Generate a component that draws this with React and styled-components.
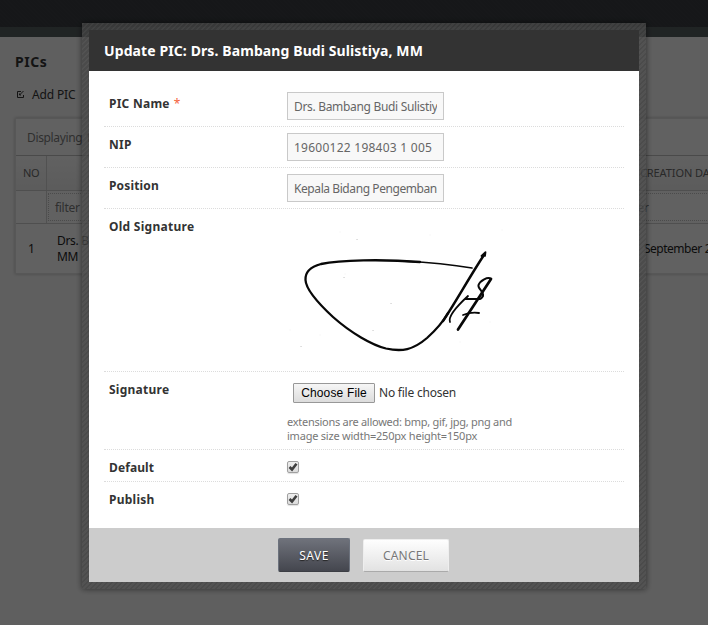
import React from "react";
import styled, { createGlobalStyle } from "styled-components";

const Global = createGlobalStyle`
  *, *::before, *::after { box-sizing: border-box; }
  html, body { margin: 0; width: 100%; height: 625px; overflow: hidden; background: #ededed; }
  body, input, button { font-family: "Noto Sans", Tahoma, sans-serif; font-size: 12px; }
`;

const T = styled.span`
  white-space: nowrap;
  letter-spacing: ${(p) => p.$ls || 0}px;
  word-spacing: ${(p) => p.$ws || 0}px;
`;

const Page = styled.div`
  height: 625px;
  overflow: hidden;
  color: #333;
`;
const TopBar = styled.div`
  height: 27px;
  background: repeating-linear-gradient(45deg, #3a3e42 0 1px, #373b3f 1px 3px);
`;
const SubBar = styled.div`
  height: 10px;
  background: #525a5b;
`;
const Content = styled.main`
  padding: 15px 0 0 15px;
`;
const PageTitle = styled.h1`
  margin: 0;
  height: 20px;
  font-size: 14px;
  line-height: 20px;
  font-weight: 700;
`;
const AddLink = styled.div`
  display: flex;
  align-items: center;
  gap: 7px;
  height: 20px;
  margin-top: 12px;
`;
const Grid = styled.section`
  width: 760px;
  margin-top: 14px;
  border: 1px solid #dadada;
  background: #f3f3f3;
  box-shadow: 0 0 3px rgba(0, 0, 0, 0.25);
`;
const Summary = styled.div`
  height: 37px;
  padding: 0 11px;
  line-height: 37px;
  color: #777;
  border-bottom: 1px solid #b8b8b8;
`;
const GridRow = styled.div`
  display: grid;
  grid-template-columns: 31px 561px 1fr;
  height: ${(p) => p.$h}px;
  border-bottom: ${(p) => (p.$last ? "0" : "1px solid #c6c6c6")};
  background: ${(p) => (p.$head ? "linear-gradient(#f3f3f3, #e5e5e5)" : "transparent")};
`;
const Cell = styled.div`
  display: flex;
  align-items: center;
  justify-content: ${(p) => (p.$center ? "center" : "flex-start")};
  padding-left: ${(p) => p.$pl || 0}px;
  line-height: 16px;
  border-right: ${(p) => (p.$rule ? "1px solid #cacaca" : "0")};
  font-size: ${(p) => p.$size || 12}px;
  color: ${(p) => p.$color || "#222"};
`;
const FilterBox = styled.div`
  flex: 1;
  height: 28px;
  margin-right: 1px;
  padding-left: ${(p) => p.$pl}px;
  border: 1px dotted #bbb;
  line-height: 28px;
`;

const Overlay = styled.div`
  position: fixed;
  inset: 0;
  background: rgba(0, 0, 0, 0.6);
`;
const Frame = styled.div`
  position: fixed;
  left: 82px;
  top: 23px;
  width: 564px;
  height: 566px;
  padding: 7px;
  background: repeating-linear-gradient(135deg, rgba(78, 78, 78, 0.75) 0 2px, rgba(68, 68, 68, 0.75) 2px 3.54px);
  box-shadow: 0 0 6px rgba(0, 0, 0, 0.55);
`;
const Dialog = styled.form`
  display: flex;
  flex-direction: column;
  height: 552px;
  background: #fff;
  color: #333;
`;
const Header = styled.header`
  height: 41px;
  padding-left: 15px;
  background: #333;
  color: #fff;
  font-size: 14px;
  font-weight: 700;
  line-height: 41px;
`;
const Body = styled.div`
  flex: 1;
  padding: 15px 15px 0;
`;
const Field = styled.div`
  display: flex;
  height: ${(p) => p.$h}px;
  padding: 6px 0 0 5px;
  border-bottom: ${(p) => (p.$last ? "0" : "1px dotted #dcdcdc")};
`;
const Label = styled.label`
  width: 178px;
  padding-top: 3px;
  line-height: 18px;
  font-weight: 700;
`;
const Required = styled.span`
  margin-left: 4px;
  color: #f4623a;
  font-weight: 400;
`;
const TextInput = styled.input`
  width: 157px;
  height: 28px;
  padding: 0 6px;
  border: 1px solid #c9c9c9;
  border-radius: 0;
  background: #f8f8f8;
  color: #666;
  outline: 0;
  letter-spacing: ${(p) => p.$ls}px;
`;
const FileRow = styled.div`
  display: flex;
  align-items: center;
  gap: 4px;
  height: 25px;
  padding: 5px 0 0 6px;
  line-height: 16px;
`;
const FileText = styled.span`
  letter-spacing: -0.22px;
  white-space: nowrap;
`;
const FileButton = styled.button`
  width: 82px;
  height: 20px;
  padding: 0;
  border: 1px solid #989898;
  border-radius: 1px;
  background: linear-gradient(#f6f6f6, #dcdcdc);
  color: #000;
  font-family: "Liberation Sans", Arial, sans-serif;
  line-height: 18px;
`;
const Hint = styled.div`
  margin-top: 12px;
  font-size: 11px;
  line-height: 14px;
  color: #777;
`;
const Box = styled.span`
  display: block;
  width: 12px;
  height: 12px;
  margin-top: 5px;
  border: 1px solid #a0a0a0;
  border-radius: 2px;
  background: linear-gradient(#eee, #dcdcdc);
  box-shadow: 0 1px 1px rgba(0, 0, 0, 0.12);
  svg { display: block; }
`;
const Footer = styled.footer`
  display: flex;
  justify-content: center;
  align-items: center;
  gap: 13px;
  height: 54px;
  padding-right: 1px;
  background: #ccc;
`;
const Button = styled.button`
  width: ${(p) => (p.$primary ? 72 : 86)}px;
  height: ${(p) => (p.$primary ? 34 : 33)}px;
  padding: 0;
  border: 1px solid ${(p) => (p.$primary ? "#6c727d" : "#eee")};
  border-bottom-color: ${(p) => (p.$primary ? "#3c3e44" : "#aaa")};
  border-radius: 2px;
  background: ${(p) => (p.$primary ? "linear-gradient(#6f727b, #44464e)" : "linear-gradient(#fefefe, #e2e2e2)")};
  color: ${(p) => (p.$primary ? "#fff" : "#777")};
  text-shadow: ${(p) => (p.$primary ? "0 1px 1px #222" : "0 1px 0 #fff")};
`;

const EditIcon = () => (
  <svg width="10" height="10" viewBox="0 0 10 10" fill="none" stroke="#333">
    <path d="M6 2.500H2.500V8.500H8.500V6M4.500 6L8.500 2M4.500 4.500V6H6" />
  </svg>
);

const Signature = () => (
  <svg width="250" height="150" viewBox="287 215 250 150" fill="none" stroke="#080808" strokeLinecap="round" strokeLinejoin="round">
    <path strokeWidth="1.600" d="M405 261.200C432 262.500 454 265 472 268" />
    <path strokeWidth="2.300" d="M420 262C382 259 340 260 321 264C310 267 305 272 305.500 280C306 290 319 304 333 317C351 333 372 345 386 348.500C402 352 413 350 427 338C437 329 443 322 448 313" />
    <path strokeWidth="2.500" d="M443 321C454 305 470 276 484 255" />
    <path strokeWidth="1.800" d="M481.500 256L485.500 252.200L485 256" />
    <path strokeWidth="2.700" d="M458 329.500L491 279" />
    <path strokeWidth="2" d="M491 279C488 276 480 281 478.500 285C477.500 289 484 291 483 296C481 300 479 299 477 299" />
    <path strokeWidth="1.800" d="M450 322C448 317 456 307 468 296L465 299L479 299M463 315C468 313 473 312 479 313" />
    <path stroke="#bbb" strokeWidth="1" d="M357 239.500h.1M373 330.500h.1M391 303.500h.1M301 346.500h.1M344 277.500h.1" />
    <path stroke="#eee" strokeWidth="1" d="M340 232h.1M430 235h.1M460 342h.1M320 335h.1M490 322h.1M502 230h.1M290 330h.1M325 304h.1M345 274h.1" />
  </svg>
);

const Check = () => (
  <Box>
    <svg width="10" height="10" viewBox="0 0 10 10" fill="none" stroke="#404040" strokeWidth="2.600">
      <path d="M1.500 5L4 7.500L8.500 1.700" />
    </svg>
  </Box>
);

export default function App() {
  return (
    <>
      <Global />
      <Page>
        <TopBar />
        <SubBar />
        <Content>
          <PageTitle><T $ls={0.5}>PICs</T></PageTitle>
          <AddLink><EditIcon /><T $ls={-0.15}>Add PIC</T></AddLink>
          <Grid>
            <Summary><T $ls={-0.35}>Displaying 1-1 of 1 result.</T></Summary>
            <GridRow $h={35} $head>
              <Cell $center $rule $size={11} $color="#666"><T $ls={-0.4}>NO</T></Cell>
              <Cell />
              <Cell $pl={32} $size={11} $color="#666"><T $ls={-0.1}>CREATION DATE</T></Cell>
            </GridRow>
            <GridRow $h={33}>
              <Cell $rule />
              <Cell $pl={1} $color="#777"><FilterBox $pl={6}><T $ls={-0.3}>filter</T></FilterBox></Cell>
              <Cell $color="#777"><FilterBox $pl={15}><T $ls={-0.3}>filter</T></FilterBox></Cell>
            </GridRow>
            <GridRow $h={49} $last>
              <Cell $center>1</Cell>
              <Cell $pl={10}><div><T $ls={-0.3}>Drs. Bambang Budi Sulistiya,</T><br /><T $ls={-0.3}>MM</T></div></Cell>
              <Cell $pl={24}><T $ls={-0.5} $ws={3}>5 September</T>&nbsp;<T>2014</T></Cell>
            </GridRow>
          </Grid>
        </Content>
      </Page>
      <Overlay />
      <Frame>
        <Dialog>
          <Header><T $ls={0.1}>Update PIC: Drs. Bambang Budi Sulistiya, MM</T></Header>
          <Body>
            <Field $h={41}>
              <Label><T $ls={0.25}>PIC Name</T><Required>*</Required></Label>
              <TextInput defaultValue="Drs. Bambang Budi Sulistiya, MM" $ls={-0.32} />
            </Field>
            <Field $h={41}>
              <Label><T $ls={0.3}>NIP</T></Label>
              <TextInput defaultValue="19600122 198403 1 005" $ls={0.25} />
            </Field>
            <Field $h={41}>
              <Label><T $ls={0.15}>Position</T></Label>
              <TextInput defaultValue="Kepala Bidang Pengembangan" $ls={-0.42} />
            </Field>
            <Field $h={163}>
              <Label><T $ls={0.27}>Old Signature</T></Label>
              <Signature />
            </Field>
            <Field $h={78}>
              <Label><T $ls={0.25}>Signature</T></Label>
              <div>
                <FileRow>
                  <FileButton type="button"><T $ls={0.15}>Choose File</T></FileButton>
                  <FileText>No file chosen</FileText>
                </FileRow>
                <Hint>
                  <T $ls={-0.27}>extensions are allowed: bmp, gif, jpg, png and</T><br />
                  <T $ls={-0.22}>image size width=250px height=150px</T>
                </Hint>
              </div>
            </Field>
            <Field $h={32}>
              <Label><T $ls={0.1}>Default</T></Label>
              <Check />
            </Field>
            <Field $h={32} $last>
              <Label><T $ls={0.25}>Publish</T></Label>
              <Check />
            </Field>
          </Body>
          <Footer>
            <Button type="button" $primary><T $ls={0.5}>SAVE</T></Button>
            <Button type="button"><T $ls={0.2}>CANCEL</T></Button>
          </Footer>
        </Dialog>
      </Frame>
    </>
  );
}
